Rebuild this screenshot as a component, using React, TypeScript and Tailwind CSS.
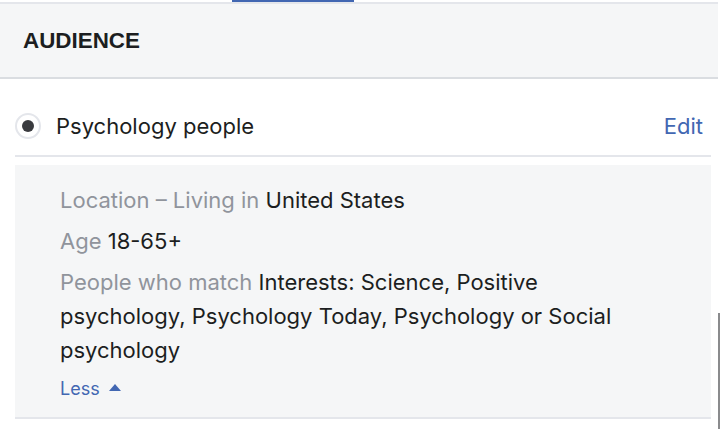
import React from "react";

export default function App() {
  const body = { fontFamily: "Inter, 'Noto Sans', sans-serif" };
  return (
    <div className="w-[720px] h-[429px] bg-white overflow-hidden flex" style={body}>
      <div className="w-[718px] flex flex-col">
        {/* top tab strip */}
        <div className="h-[2px] flex">
          <div className="ml-[232px] w-[122px] h-[2px] bg-[#4267b2]" />
        </div>
        <div className="h-[2px] bg-[#e4e6eb]" />
        {/* header */}
        <div className="h-[75px] bg-[#f5f6f7] border-b-2 border-[#dadde1] flex items-center px-[23px]">
          <span
            className="text-[22.4px] font-bold text-[#1c1e21]"
            style={{ fontFamily: "'Liberation Sans', Arial, sans-serif" }}
          >
            AUDIENCE
          </span>
        </div>
        {/* content */}
        <div className="pl-[15px] pr-[7px] flex flex-col">
          <div className="pt-[34px] pb-[16px] border-b-2 border-[#e4e6eb] flex items-center">
            <div className="w-[26px] h-[26px] rounded-full border-2 border-[#e4e6eb] flex items-center justify-center bg-white">
              <div className="w-[12px] h-[12px] rounded-full bg-[#3a3b3f]" />
            </div>
            <span className="ml-[15px] text-[22px] text-[#1c1e21] leading-[24px]">Psychology people</span>
            <span className="ml-auto mr-[8px] text-[22px] text-[#4267b2] leading-[24px]">Edit</span>
          </div>
          <div className="mt-[8px] bg-[#f5f6f7] border-b-2 border-[#e4e6eb] pl-[45px] pr-[50px] pt-[18px] pb-[16px] flex flex-col gap-[7px] text-[22px] leading-[34px]">
            <div>
              <span className="text-[#90949c]">Location – Living in </span>
              <span className="text-[#1c1e21]">United States</span>
            </div>
            <div>
              <span className="text-[#90949c]">Age </span>
              <span className="text-[#1c1e21]">18-65+</span>
            </div>
            <div>
              <span className="text-[#90949c]">People who match </span>
              <span className="text-[#1c1e21]">
                Interests: Science, Positive psychology, Psychology Today, Psychology or Social psychology
              </span>
            </div>
            <div className="flex items-center text-[18px] leading-[24px] text-[#4267b2] mt-[3px]">
              <span>Less</span>
              <svg width="12" height="7" viewBox="0 0 12 7" className="ml-[9px] mb-[4px]">
                <path d="M0 7 L6 0 L12 7 Z" fill="#4267b2" />
              </svg>
            </div>
          </div>
        </div>
      </div>
      <div className="w-[2px] flex flex-col">
        <div className="h-[313px]" />
        <div className="flex-1 bg-[#8a8b8d]" />
      </div>
    </div>
  );
}
